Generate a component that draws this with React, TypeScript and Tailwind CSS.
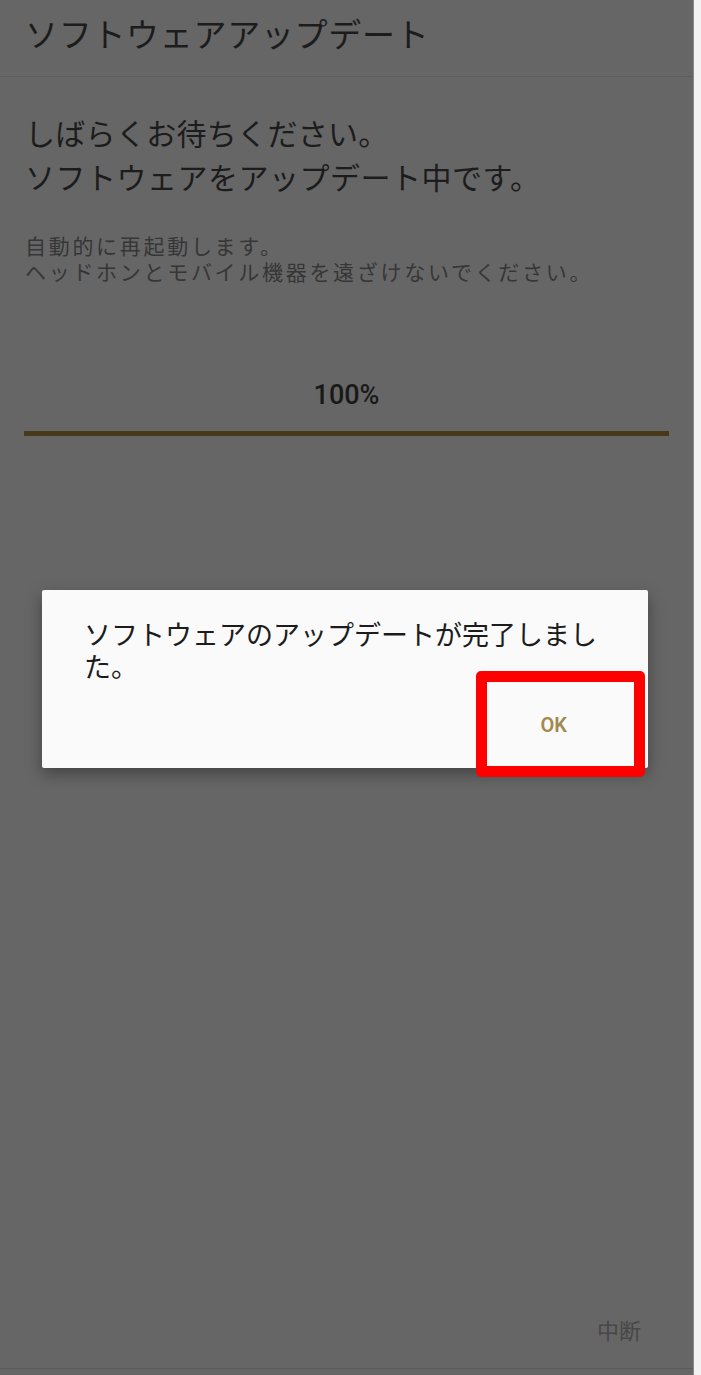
import React from "react";

const jp = { fontFamily: '"Noto Sans CJK JP", "Noto Sans", sans-serif' };
const rb = { fontFamily: 'Roboto, "Noto Sans", sans-serif' };

export default function App() {
  return (
    <div className="flex w-[701px] h-[1375px] bg-[#f2f2f2] overflow-hidden" style={jp}>
      <div className="relative flex flex-col w-[694px] h-[1375px] bg-[#666666] border-r border-[#8a8a8a]">
        <div className="h-[77px] flex items-center px-[25px] pb-[10px] border-b border-[#5d5d5d] shrink-0">
          <span className="text-[33px] leading-none text-[#1c1c1c] tracking-[0.7px]">ソフトウェアアップデート</span>
        </div>
        <div className="flex flex-col px-[25px] pt-[33px]">
          <p className="text-[30px] leading-[44px] text-[#1c1c1c] tracking-[0.3px]">しばらくお待ちください。</p>
          <p className="text-[30px] leading-[44px] text-[#1c1c1c] tracking-[0.5px]">ソフトウェアをアップデート中です。</p>
          <p className="mt-[34px] text-[21px] leading-[26px] text-[#363636] tracking-[2.7px]">
            自動的に再起動します。
            <br />
            ヘッドホンとモバイル機器を遠ざけないでください。
          </p>
        </div>
        <div className="mt-[98px] text-center text-[27px] leading-none font-medium text-[#191919]" style={rb}>100%</div>
        <div className="mx-[24px] mt-[22px] h-[5px] bg-[#49391b]" />
        <div className="flex-1" />
        <div className="flex justify-end pr-[52px] pb-[28px]">
          <span className="text-[22px] leading-none text-[#474747]">中断</span>
        </div>
        <div className="h-[7px] border-t border-[#5a5a5a]" />

        <div className="absolute left-[42px] top-[590px] w-[606px] h-[178px] bg-[#fafafa] rounded-[2px] shadow-[0_6px_16px_rgba(0,0,0,0.35)] flex flex-col">
          <p className="pl-[42px] pt-[28px] w-[572px] text-[27px] leading-[32px] text-[#1c1c1c]">
            ソフトウェアのアップデートが完了しました。
          </p>
          <div className="flex-1" />
          <div className="flex justify-end pr-[81px] pb-[33px]">
            <span className="text-[20px] leading-none font-semibold text-[#a3894e]" style={rb}>OK</span>
          </div>
          <div className="absolute left-[434px] top-[81px] w-[169px] h-[106px] border-[11px] border-[#ff0000] rounded-[5px]" />
        </div>
      </div>
    </div>
  );
}
